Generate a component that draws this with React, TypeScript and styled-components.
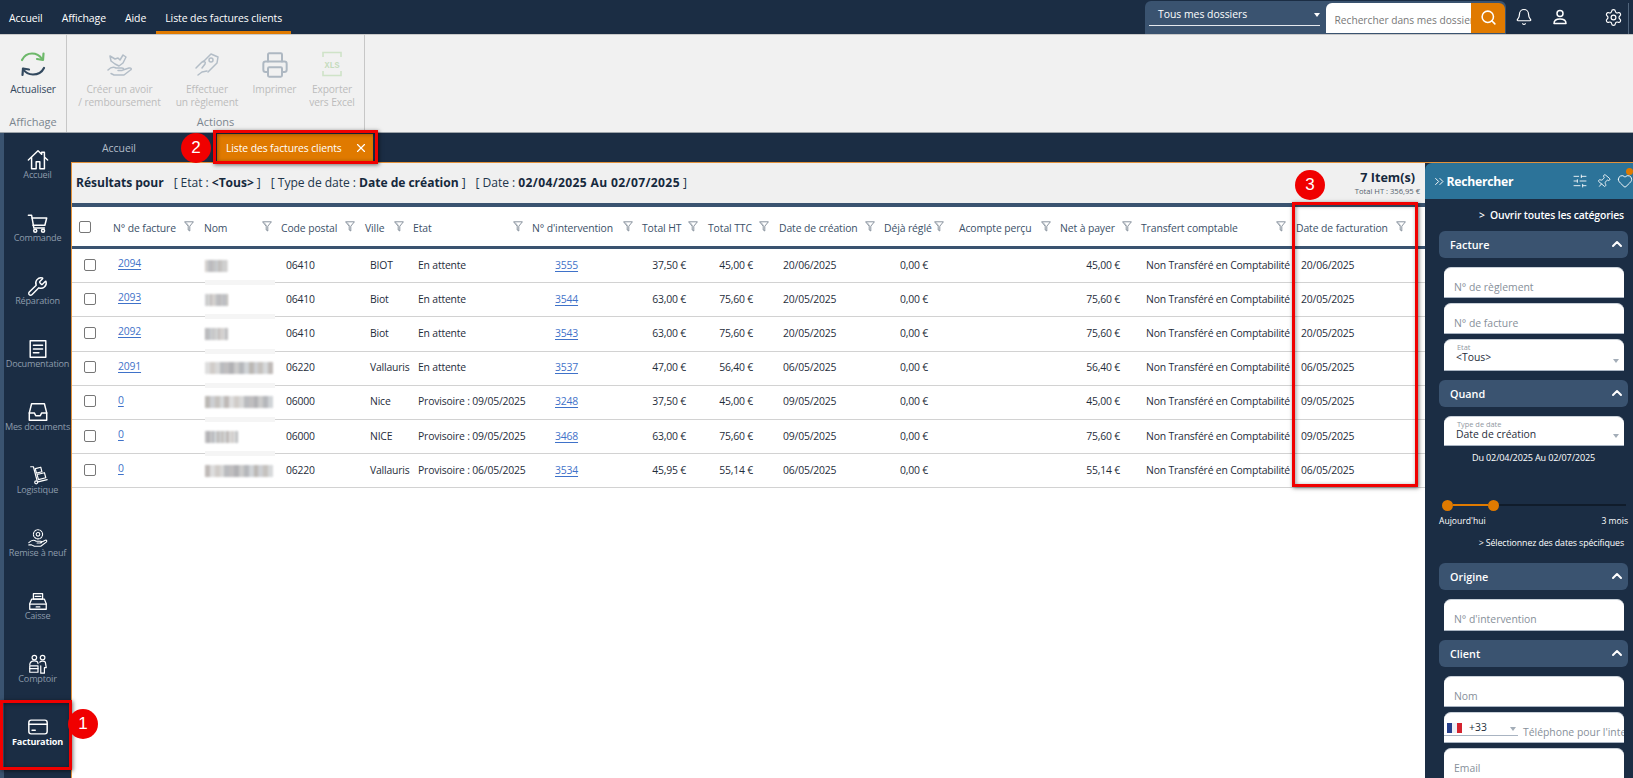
import React from 'react';
import styled, { createGlobalStyle } from 'styled-components';
import { Wrench, Printer, Search, X, Bell, Settings, SlidersHorizontal, Pin, Heart, ChevronUp, ChevronsRight } from 'lucide-react';

const NAVY = '#1b2d44';
const SLATE = '#3a5370';
const ORANGE = '#e07a00';
const FONT = '"Open Sans", "Noto Sans", sans-serif';

const Global = createGlobalStyle`
  html, body { margin: 0; padding: 0; background: #fff; }
  * { box-sizing: border-box; }
  body { font-family: ${FONT}; }
`;

const Page = styled.div`
  position: relative;
  width: 1633px;
  height: 778px;
  overflow: hidden;
  display: flex;
  flex-direction: column;
  background: ${NAVY};
  font-size: 10px;
`;

/* ---------- top bar ---------- */
const TopBar = styled.header`
  height: 34px;
  flex: none;
  display: flex;
  align-items: stretch;
  justify-content: space-between;
  background: ${NAVY};
`;
const Menu = styled.nav`
  display: flex;
  padding-left: 9px;
  gap: 19px;
`;
const MenuItem = styled.div<{ $active?: boolean }>`
  display: flex;
  align-items: center;
  height: 34px;
  padding-top: 1px;
  color: #fff;
  font-size: 10.5px;
  letter-spacing: -0.1px;
  ${p => p.$active && `
    margin-left: -9px;
    padding: 4px 9px 0;
    border-bottom: 3px solid ${ORANGE};
  `}
`;
const TopRight = styled.div`
  display: flex;
  align-items: flex-start;
`;
const SearchGroup = styled.div`
  width: 361px;
  height: 33px;
  margin-top: 1px;
  display: flex;
  padding: 2px 1px 0 4px;
  background: ${SLATE};
  border-radius: 6px 6px 0 0;
`;
const Scope = styled.div`
  position: relative;
  width: 171px;
  height: 23px;
  padding: 4px 0 0 9px;
  margin-right: 6px;
  color: #fff;
  font-size: 10.4px;
  border-bottom: 1px solid #e5e9ee;
`;
const ScopeCaret = styled.span`
  position: absolute;
  right: 0;
  top: 10px;
  border-left: 3.5px solid transparent;
  border-right: 3.5px solid transparent;
  border-top: 4px solid #fff;
`;
const SearchBox = styled.div`
  width: 146px;
  height: 30px;
  padding: 10px 0 0 9px;
  background: #fff;
  border-radius: 6px 0 0 0;
  color: #777;
  font-size: 10.2px;
  white-space: nowrap;
  overflow: hidden;
`;
const SearchButton = styled.div`
  width: 34px;
  height: 30px;
  display: flex;
  align-items: center;
  justify-content: center;
  padding-bottom: 1px;
  background: ${ORANGE};
  color: #fff;
  border-radius: 0 6px 0 0;
`;
const TopIcons = styled.div`
  width: 127px;
  height: 34px;
  display: flex;
  align-items: center;
  color: #fff;
`;
const TopIcon = styled.span<{ $left: number }>`
  display: flex;
  margin-left: ${p => p.$left}px;
`;
const EdgeBar = styled.span`
  width: 1px;
  height: 31px;
  margin: 3px 0 0 5px;
  background: #51657c;
`;

/* ---------- ribbon ---------- */
const Ribbon = styled.section`
  height: 99px;
  flex: none;
  display: flex;
  background: #f1f1f1;
  border-top: 1px solid #c9c9c9;
  border-bottom: 1px solid #9ea4aa;
`;
const RibbonGroup = styled.div<{ $w: number }>`
  width: ${p => p.$w}px;
  display: flex;
  flex-direction: column;
  border-right: 1px solid #c7c7c7;
`;
const RibbonButtons = styled.div`
  flex: 1;
  min-height: 0;
  display: flex;
`;
const RibbonButton = styled.div<{ $w: number; $off?: boolean }>`
  width: ${p => p.$w}px;
  display: flex;
  flex-direction: column;
  align-items: center;
  padding-top: 16px;
  text-align: center;
  font-size: 10.2px;
  line-height: 13px;
  letter-spacing: -0.1px;
  color: ${p => (p.$off ? '#bcbcbc' : '#33475c')};
`;
const RibbonIcon = styled.div`
  height: 32px;
  display: flex;
  align-items: flex-start;
`;
const RibbonLabel = styled.div`
  height: 20px;
  flex: none;
  text-align: center;
  color: #7b858f;
  font-size: 11px;
  line-height: 20px;
`;

/* ---------- body ---------- */
const Body = styled.div`
  flex: 1;
  min-height: 0;
  display: flex;
`;
const Sidebar = styled.aside`
  width: 71px;
  flex: none;
  padding-top: 12px;
  background: ${NAVY};
  border-left: 4px solid ${SLATE};
`;
const SideItem = styled.div`
  height: 63px;
  display: flex;
  flex-direction: column;
  align-items: center;
  padding-top: 3px;
  color: #fff;
`;
const SideIcon = styled.div`
  height: 24px;
  display: flex;
  align-items: center;
  justify-content: center;
`;
const SideLabel = styled.div<{ $active?: boolean }>`
  margin-top: -3px;
  font-size: 9.1px;
  letter-spacing: -0.2px;
  line-height: 12px;
  white-space: nowrap;
  color: ${p => (p.$active ? '#fff' : '#8d9cac')};
  font-weight: ${p => (p.$active ? 700 : 400)};
`;
const MainColumn = styled.main`
  flex: 1;
  min-width: 0;
  display: flex;
  flex-direction: column;
`;
const TabBar = styled.div`
  height: 29px;
  flex: none;
  display: flex;
  align-items: stretch;
`;
const PlainTab = styled.div`
  width: 146px;
  padding: 8px 0 0 31px;
  color: #b2bcc7;
  font-size: 10.4px;
`;
const ActiveTab = styled.div`
  width: 156px;
  margin-top: 1px;
  display: flex;
  align-items: center;
  justify-content: space-between;
  padding: 0 5px 0 9px;
  background: ${ORANGE};
  color: #fff;
  font-size: 10.4px;
  letter-spacing: -0.1px;
`;
const Workspace = styled.div`
  flex: 1;
  min-height: 0;
  display: flex;
  border-top: 1px solid #e2913a;
`;
const Results = styled.div`
  width: 1354px;
  flex: none;
  background: #fff;
  border-left: 1px solid #e2913a;
`;
const ResultHead = styled.div`
  height: 44px;
  display: flex;
  justify-content: space-between;
  background: #f0f0f0;
  border-bottom: 4px solid ${SLATE};
  color: #22364b;
`;
const Criteria = styled.div`
  display: flex;
  padding: 12px 0 0 4px;
  font-size: 12.1px;
  line-height: 16px;
  white-space: pre;
  letter-spacing: -0.05px;
  b { font-weight: 700; color: #16293d; }
`;
const CriteriaPart = styled.span`
  margin-right: 10px;
`;
const DateValue = styled.b`
  letter-spacing: 0.35px;
`;
const Totals = styled.div`
  display: flex;
  flex-direction: column;
  align-items: flex-end;
  padding: 7px 5px 0 0;
`;
const ItemCount = styled.div`
  font-size: 12.6px;
  font-weight: 700;
  line-height: 16px;
  padding-right: 5px;
  color: #16293d;
`;
const TotalHT = styled.div`
  font-size: 7.6px;
  line-height: 11px;
  color: #55636f;
`;

const COLS = '33px 91px 77px 84px 48px 119px 110px 66px 71px 105px 75px 101px 81px 155px 137px';

const HeadRow = styled.div`
  height: 41px;
  margin-top: 1px;
  display: grid;
  grid-template-columns: ${COLS};
  border-bottom: 3px solid ${SLATE};
  background: #fff;
`;
const HeadCell = styled.div<{ $pr: number }>`
  display: flex;
  align-items: center;
  justify-content: space-between;
  padding: 2px ${p => p.$pr}px 0 8px;
  color: #3b5068;
  font-size: 10.4px;
  letter-spacing: -0.1px;
  white-space: nowrap;
  svg { margin-top: -3px; flex: none; }
`;
const Row = styled.div`
  height: 34.2px;
  display: grid;
  grid-template-columns: ${COLS};
  border-bottom: 1px solid #d2d2d2;
`;
const Cell = styled.div<{ $align?: string; $pl?: number; $pr?: number }>`
  position: relative;
  display: flex;
  align-items: center;
  min-width: 0;
  white-space: nowrap;
  justify-content: ${p => (p.$align === 'right' ? 'flex-end' : 'flex-start')};
  padding: 0 ${p => p.$pr ?? 0}px 2px ${p => p.$pl ?? 13}px;
  color: #1f2d3b;
  font-size: 10.4px;
  letter-spacing: -0.18px;
`;
const NameCell = styled.div<{ $band: boolean }>`
  position: relative;
  display: flex;
  align-items: center;
  padding-left: 9px;
  ${p => p.$band && `
    &::before {
      content: '';
      position: absolute;
      left: 9px;
      top: -3px;
      width: 70px;
      height: 5px;
      background: #f5f5f5;
    }
  `}
`;
const Blur = styled.div`
  height: 12px;
  filter: blur(1px);
  opacity: 0.85;
`;
const Check = styled.span<{ $ml: number }>`
  width: 12px;
  height: 12px;
  flex: none;
  margin-left: ${p => p.$ml}px;
  background: #fff;
  border: 1.5px solid #777;
  border-radius: 2px;
`;
const CheckHead = styled.div`
  display: flex;
  align-items: center;
`;
const CheckCell = styled.div`
  display: flex;
  align-items: center;
  padding-bottom: 2px;
`;
const DocLink = styled.a`
  color: #3f72c9;
  text-decoration: underline;
  text-underline-offset: 2px;
`;
const UpLink = styled(DocLink)`
  margin-top: -3px;
`;

/* ---------- search panel ---------- */
const Panel = styled.aside`
  width: 208px;
  flex: none;
  background: ${NAVY};
  border-radius: 7px 0 0 0;
  overflow: hidden;
  color: #fff;
`;
const PanelHead = styled.div`
  height: 36px;
  display: flex;
  align-items: center;
  padding-left: 7px;
  background: #2c7399;
`;
const PanelTitle = styled.div`
  width: 126px;
  font-size: 12.2px;
  font-weight: 700;
  letter-spacing: -0.25px;
`;
const PanelIcon = styled.span<{ $ml: number }>`
  display: flex;
  margin-left: ${p => p.$ml}px;
`;
const HeartWrap = styled.span`
  position: relative;
  display: flex;
  margin-left: 6px;
`;
const Dot = styled.span`
  position: absolute;
  left: 9px;
  top: -5px;
  width: 7px;
  height: 7px;
  border-radius: 50%;
  background: ${ORANGE};
`;
const PanelBody = styled.div`
  padding: 0 5px 0 14px;
`;
const OpenAll = styled.div`
  height: 32px;
  padding: 9px 4px 0 0;
  text-align: right;
  font-size: 10.4px;
  font-weight: 600;
  letter-spacing: -0.15px;
  white-space: pre;
`;
const SectionHead = styled.div`
  height: 27px;
  margin-bottom: 9px;
  display: flex;
  align-items: center;
  justify-content: space-between;
  padding: 0 3px 1px 11px;
  background: ${SLATE};
  border-radius: 6px;
  font-size: 10.8px;
  font-weight: 600;
`;
const Fields = styled.div`
  padding: 0 4px 0 5px;
  margin-bottom: 9px;
`;
const Field = styled.div<{ $h?: number }>`
  position: relative;
  height: ${p => p.$h ?? 31}px;
  margin-bottom: 5px;
  padding: 12px 0 0 10px;
  background: #fff;
  border-radius: 7px 7px 0 0;
  border-top: 1px solid #c9d0d8;
  border-bottom: 1px solid #a9b4c2;
  color: #87909a;
  font-size: 10.4px;
  line-height: 14px;
  white-space: nowrap;
  overflow: hidden;
  &:last-child { margin-bottom: 0; }
`;
const SelectField = styled(Field)`
  padding: 3px 0 0 13px;
  color: #1f2d3b;
`;
const TinyLabel = styled.div`
  font-size: 7.4px;
  line-height: 8px;
  color: #8f98a2;
`;
const SelectValue = styled.div`
  font-size: 10.4px;
  line-height: 13px;
  margin-left: -1px;
`;
const SelectCaret = styled.span`
  position: absolute;
  right: 5px;
  bottom: 7px;
  border-left: 3.5px solid transparent;
  border-right: 3.5px solid transparent;
  border-top: 4px solid #a3adb8;
`;
const DateRange = styled.div`
  margin-top: -4px;
  height: 14px;
  text-align: center;
  font-size: 9.1px;
  line-height: 14px;
  font-weight: 500;
  letter-spacing: -0.15px;
`;
const Slider = styled.div`
  margin-top: 34px;
  height: 12px;
  display: flex;
  align-items: center;
  padding: 0 2px 0 3px;
`;
const Thumb = styled.span`
  width: 11px;
  height: 11px;
  flex: none;
  border-radius: 50%;
  background: ${ORANGE};
`;
const ActiveTrack = styled.span`
  width: 35px;
  height: 2px;
  background: ${ORANGE};
`;
const RestTrack = styled.span`
  flex: 1;
  height: 2px;
  background: #101c2b;
`;
const SliderLabels = styled.div`
  margin-top: 4px;
  display: flex;
  justify-content: space-between;
  font-size: 8.6px;
  line-height: 12px;
  font-weight: 500;
`;
const SpecificDates = styled.div`
  margin: 10px 4px 14px 0;
  text-align: right;
  font-size: 8.8px;
  line-height: 12px;
  letter-spacing: -0.1px;
  font-weight: 500;
`;
const PhoneField = styled(Field)`
  display: flex;
  padding: 0;
`;
const Dial = styled.div`
  position: relative;
  width: 74px;
  height: 23px;
  flex: none;
  display: flex;
  align-items: flex-end;
  padding: 0 0 1px 25px;
  border-bottom: 1px solid #a9b4c2;
  color: #1f2d3b;
`;
const Flag = styled.span`
  position: absolute;
  left: 3px;
  top: 10px;
  width: 15px;
  height: 10px;
  filter: blur(0.7px);
  background: linear-gradient(90deg, #27408b 0 33%, #eef0f6 33% 66%, #d5232f 66%);
`;
const DialCaret = styled(SelectCaret)`
  right: 2px;
  bottom: 4px;
`;
const PhoneHint = styled.div`
  margin: 12px 0 0 5px;
`;

/* ---------- annotations ---------- */
const Callout = styled.div<{ $x: number; $y: number; $w: number; $h: number }>`
  position: absolute;
  left: ${p => p.$x}px;
  top: ${p => p.$y}px;
  width: ${p => p.$w}px;
  height: ${p => p.$h}px;
  border: 3px solid #f00000;
  box-shadow: 1px 1px 4px rgba(0, 0, 0, 0.55), inset 1px 1px 4px rgba(0, 0, 0, 0.4);
  pointer-events: none;
`;
const Badge = styled.div<{ $x: number; $y: number }>`
  position: absolute;
  left: ${p => p.$x}px;
  top: ${p => p.$y}px;
  width: 30px;
  height: 30px;
  display: flex;
  align-items: center;
  justify-content: center;
  border-radius: 50%;
  background: #f00000;
  color: #fff;
  font-family: "Liberation Sans", sans-serif;
  font-size: 17px;
`;

/* ---------- icons ---------- */
const Line: React.FC<{ s?: number; children: React.ReactNode; vb?: string; c?: string; w?: number }> = ({ s = 22, children, vb = '0 0 24 24', c = 'currentColor', w = 1.6 }) => (
  <svg width={s} height={s} viewBox={vb} fill="none" stroke={c} strokeWidth={w} strokeLinecap="round" strokeLinejoin="round">{children}</svg>
);
const HomeIcon = () => <Line><path d="M1.5 12 12 2l4 3.8V3.5h3v5.2l3.5 3.3" /><path d="M5 9.500V21.500h5V14h4v7.500h5V9.500" /></Line>;
const CartIcon = () => <Line><path d="M1.500 3.500h3.500l2.500 14h11.500" /><path d="M5.500 6.500h16l-2 8h-13" /><circle cx="9" cy="20.500" r="1.700" /><circle cx="17.500" cy="20.500" r="1.700" /></Line>;
const DocIcon = () => <Line><rect x="3.500" y="3" width="17" height="18" /><path d="M7 8h10M7 12h10M7 16h6" /></Line>;
const TrayIcon = () => <Line><path d="M5 3h14l2.500 10v8h-19v-8z" /><path d="M2.500 13H8l1.500 3h5l1.500-3h5.500" /></Line>;
const TruckIcon = () => <Line w={1.3}><path d="M4 3h3l4 15" /><circle cx="10" cy="20" r="1.600" /><path d="M12 19.500 22 17" /><path d="M9 5l6-1.500 1.300 5-6 1.500zM11 11.500l8-2 1.500 5.500-8 2z" /></Line>;
const RefurbIcon = () => <Line w={1.2}><circle cx="12" cy="8" r="2" /><circle cx="12" cy="8" r="5" strokeDasharray="2 1.200" /><path d="M2 17c3-3 6-3 8-1.500h5c1.200 0 1.200 2 0 2h-4M15 17l5-2.500c1.500-.5 2.200 1 1 2l-6 4.500H8l-3-1.500H2" /></Line>;
const RegisterIcon = () => <Line w={1.4}><path d="M7 4h10v6H7z" /><path d="M5 10h14l2 5v6H3v-6z" /><path d="M3 15.500h18M10 18.500h4M9 7h6" /></Line>;
const CounterIcon = () => <Line w={1.3}><circle cx="8" cy="5" r="2.500" /><circle cx="17" cy="5" r="2.500" /><path d="M3 13c0-3 2-4.500 5-4.500s4 1 4 3" /><path d="M14 10c1-1.500 5-1.500 6 0l1 6h-2v6h-4v-8" /><rect x="3" y="14" width="9" height="7" /><path d="M3 17h9" /></Line>;
const CardIcon = () => <Line><rect x="2" y="4.500" width="20" height="15" rx="2.500" /><path d="M2 9h20M5.500 15.500h3.500" /></Line>;

const FilterIcon = () => (
  <svg width="10" height="11" viewBox="0 0 10 11" fill="none" stroke="#7d8894" strokeWidth="0.9" strokeLinejoin="round">
    <path d="M.6.8h8.800L5.800 5.200V10L4.200 9V5.200z" />
    <path d="M2.300 1.500 4.800 5" strokeWidth="0.5" />
  </svg>
);
const RefreshIcon = () => (
  <svg width="26" height="26" viewBox="0 0 26 26" fill="none" strokeWidth="2.200" strokeLinecap="round" strokeLinejoin="round">
    <path d="M2 9c2.500-5 6-6.500 10-6.500S20 5 22 8" stroke="#6db86a" />
    <path d="M23.500 2.500 23 9l-6-1" stroke="#6db86a" />
    <path d="M24 17c-2.500 5-6 6.500-11 6.500S5 21 3 18" stroke="#33495f" />
    <path d="M2.500 24 3 17.500l6 1" stroke="#33495f" />
  </svg>
);
const HandNoteIcon = () => (
  <svg width="26" height="26" viewBox="0 0 26 26" fill="none" stroke="#b3bdc7" strokeWidth="1.500" strokeLinejoin="round" strokeLinecap="round">
    <path d="M3 5l5 3 3-1 2 2 3-5 3 2-3 6-4 3-4-2-4-3z" />
    <path d="M1 19c3-3 6-3 8-2h6c2 0 2 2 0 2.500h-4M16 19l6-2c2-.5 3 1 1.500 2L17 24H7l-3-1.500" />
  </svg>
);
const HandBillIcon = () => (
  <svg width="26" height="26" viewBox="0 0 26 26" fill="none" stroke="#b3bdc7" strokeWidth="1.500" strokeLinejoin="round" strokeLinecap="round">
    <path d="M9 11 17 3l7 3-1 6-9 9" />
    <circle cx="17" cy="9" r="2" />
    <path d="M2 17l6-6c2-1.500 4 0 3 2l-3 4M4 24l4-3 5-1" />
  </svg>
);
const XlsIcon = () => (
  <svg width="22" height="26" viewBox="0 0 22 26" fill="none" stroke="#cfe3c8" strokeWidth="1.600">
    <path d="M2 6V1.500h18V6M2 20v4.500h18V20" />
    <text x="11" y="16.500" fill="#c5dcbd" stroke="none" fontSize="8.500" fontWeight="700" textAnchor="middle" fontFamily="'Liberation Mono', monospace">XLS</text>
  </svg>
);
const UserIcon = () => (
  <svg width="16" height="16" viewBox="0 0 16 16" fill="none" stroke="#fff" strokeWidth="1.500" strokeLinejoin="round">
    <circle cx="8" cy="4.500" r="3" />
    <path d="M2 14.500c0-3.500 2.500-4.500 6-4.500s6 1 6 4.500z" />
  </svg>
);

/* ---------- data ---------- */
const HEAD: [string, number][] = [
  ['N° de facture', 2], ['Nom', 1], ['Code postal', 2], ['Ville', 1], ['Etat', 1], ["N° d'intervention", 1],
  ['Total HT', 2], ['Total TTC', 2], ['Date de création', 1], ['Déjà réglé', 7], ['Acompte perçu', 1],
  ['Net à payer', 1], ['Transfert comptable', 2], ['Date de facturation', 19],
];

const MOSAIC = ['#c9c4c0', '#b5b3b5', '#a9abb0', '#c5c7cb', '#b4aeab', '#d2d2d2', '#a4a4a8', '#c8ccd0', '#bcb8b4', '#d8d8d8', '#aeb0b4', '#c2c2c2', '#b0aca8', '#cfd2d4'];
const blurBg = (seed: number) => {
  const n = MOSAIC.length;
  const stops = Array.from({ length: n }, (_, i) => {
    const c = MOSAIC[(i * 5 + seed * 3) % n];
    return `${c} ${(i * 100) / n}% ${((i + 1) * 100) / n}%`;
  });
  return `linear-gradient(90deg, ${stops.join(',')})`;
};

type Inv = { no: string; nameW: number; cp: string; ville: string; etat: string; inter: string; ht: string; ttc: string; cree: string; net: string; fact: string };
const ROWS: Inv[] = [
  { no: '2094', nameW: 23, cp: '06410', ville: 'BIOT', etat: 'En attente', inter: '3555', ht: '37,50 €', ttc: '45,00 €', cree: '20/06/2025', net: '45,00 €', fact: '20/06/2025' },
  { no: '2093', nameW: 23, cp: '06410', ville: 'Biot', etat: 'En attente', inter: '3544', ht: '63,00 €', ttc: '75,60 €', cree: '20/05/2025', net: '75,60 €', fact: '20/05/2025' },
  { no: '2092', nameW: 23, cp: '06410', ville: 'Biot', etat: 'En attente', inter: '3543', ht: '63,00 €', ttc: '75,60 €', cree: '20/05/2025', net: '75,60 €', fact: '20/05/2025' },
  { no: '2091', nameW: 71, cp: '06220', ville: 'Vallauris', etat: 'En attente', inter: '3537', ht: '47,00 €', ttc: '56,40 €', cree: '06/05/2025', net: '56,40 €', fact: '06/05/2025' },
  { no: '0', nameW: 68, cp: '06000', ville: 'Nice', etat: 'Provisoire : 09/05/2025', inter: '3248', ht: '37,50 €', ttc: '45,00 €', cree: '09/05/2025', net: '45,00 €', fact: '09/05/2025' },
  { no: '0', nameW: 33, cp: '06000', ville: 'NICE', etat: 'Provisoire : 09/05/2025', inter: '3468', ht: '63,00 €', ttc: '75,60 €', cree: '09/05/2025', net: '75,60 €', fact: '09/05/2025' },
  { no: '0', nameW: 71, cp: '06220', ville: 'Vallauris', etat: 'Provisoire : 06/05/2025', inter: '3534', ht: '45,95 €', ttc: '55,14 €', cree: '06/05/2025', net: '55,14 €', fact: '06/05/2025' },
];

const SIDE: [string, React.ReactNode][] = [
  ['Accueil', <HomeIcon />],
  ['Commande', <CartIcon />],
  ['Réparation', <Wrench size={21} strokeWidth={1.6} />],
  ['Documentation', <DocIcon />],
  ['Mes documents', <TrayIcon />],
  ['Logistique', <TruckIcon />],
  ['Remise à neuf', <RefurbIcon />],
  ['Caisse', <RegisterIcon />],
  ['Comptoir', <CounterIcon />],
  ['Facturation', <CardIcon />],
];

const Section: React.FC<{ title: string }> = ({ title }) => (
  <SectionHead>{title}<ChevronUp size={16} strokeWidth={3} /></SectionHead>
);

export default function App() {
  return (
    <Page>
      <Global />
      <TopBar>
        <Menu>
          <MenuItem>Accueil</MenuItem>
          <MenuItem>Affichage</MenuItem>
          <MenuItem>Aide</MenuItem>
          <MenuItem $active>Liste des factures clients</MenuItem>
        </Menu>
        <TopRight>
          <SearchGroup>
            <Scope>Tous mes dossiers<ScopeCaret /></Scope>
            <SearchBox>Rechercher dans mes dossiers</SearchBox>
            <SearchButton><Search size={17} strokeWidth={2.2} /></SearchButton>
          </SearchGroup>
          <TopIcons>
            <TopIcon $left={9}><Bell size={18} strokeWidth={1.6} /></TopIcon>
            <TopIcon $left={19}><UserIcon /></TopIcon>
            <TopIcon $left={36}><Settings size={19} strokeWidth={1.5} /></TopIcon>
            <EdgeBar />
          </TopIcons>
        </TopRight>
      </TopBar>

      <Ribbon>
        <RibbonGroup $w={67}>
          <RibbonButtons>
            <RibbonButton $w={66}><RibbonIcon><RefreshIcon /></RibbonIcon>Actualiser</RibbonButton>
          </RibbonButtons>
          <RibbonLabel>Affichage</RibbonLabel>
        </RibbonGroup>
        <RibbonGroup $w={298}>
          <RibbonButtons>
            <RibbonButton $w={105} $off><RibbonIcon><HandNoteIcon /></RibbonIcon>Créer un avoir<br />/ remboursement</RibbonButton>
            <RibbonButton $w={70} $off><RibbonIcon><HandBillIcon /></RibbonIcon>Effectuer<br />un règlement</RibbonButton>
            <RibbonButton $w={65} $off><RibbonIcon><Printer size={28} strokeWidth={1.7} color="#aeb8c2" /></RibbonIcon>Imprimer</RibbonButton>
            <RibbonButton $w={50} $off><RibbonIcon><XlsIcon /></RibbonIcon>Exporter<br />vers Excel</RibbonButton>
          </RibbonButtons>
          <RibbonLabel>Actions</RibbonLabel>
        </RibbonGroup>
      </Ribbon>

      <Body>
        <Sidebar>
          {SIDE.map(([label, icon], i) => (
            <SideItem key={label}>
              <SideIcon>{icon}</SideIcon>
              <SideLabel $active={i === SIDE.length - 1}>{label}</SideLabel>
            </SideItem>
          ))}
        </Sidebar>
        <MainColumn>
          <TabBar>
            <PlainTab>Accueil</PlainTab>
            <ActiveTab>Liste des factures clients<X size={14} strokeWidth={2} /></ActiveTab>
          </TabBar>
          <Workspace>
            <Results>
              <ResultHead>
                <Criteria>
                  <CriteriaPart><b>Résultats pour</b></CriteriaPart>
                  <CriteriaPart>[ Etat : <b>&lt;Tous&gt;</b> ]</CriteriaPart>
                  <CriteriaPart>[ Type de date : <b>Date de création</b> ]</CriteriaPart>
                  <CriteriaPart>[ Date : <DateValue>02/04/2025 Au 02/07/2025</DateValue> ]</CriteriaPart>
                </Criteria>
                <Totals>
                  <ItemCount>7 Item(s)</ItemCount>
                  <TotalHT>Total HT : 356,95 €</TotalHT>
                </Totals>
              </ResultHead>
              <HeadRow>
                <CheckHead><Check $ml={7} /></CheckHead>
                {HEAD.map(([label, pr]) => (
                  <HeadCell key={label} $pr={pr}>{label}<FilterIcon /></HeadCell>
                ))}
              </HeadRow>
              {ROWS.map((r, i) => (
                <Row key={r.inter}>
                  <CheckCell><Check $ml={12} /></CheckCell>
                  <Cell><UpLink>{r.no}</UpLink></Cell>
                  <NameCell $band={i > 0}><Blur style={{ width: r.nameW, background: blurBg(i) }} /></NameCell>
                  <Cell>{r.cp}</Cell>
                  <Cell>{r.ville}</Cell>
                  <Cell>{r.etat}</Cell>
                  <Cell $pl={31}><DocLink>{r.inter}</DocLink></Cell>
                  <Cell $align="right" $pr={14}>{r.ht}</Cell>
                  <Cell $align="right" $pr={18}>{r.ttc}</Cell>
                  <Cell $pl={12}>{r.cree}</Cell>
                  <Cell $align="right" $pr={23}>0,00 €</Cell>
                  <Cell />
                  <Cell $align="right" $pr={13}>{r.net}</Cell>
                  <Cell $pl={13}>Non Transféré en Comptabilité</Cell>
                  <Cell>{r.fact}</Cell>
                </Row>
              ))}
            </Results>
            <Panel>
              <PanelHead>
                <ChevronsRight size={15} strokeWidth={1.6} />
                <PanelTitle>Rechercher</PanelTitle>
                <PanelIcon $ml={3}><SlidersHorizontal size={16} strokeWidth={1.3} /></PanelIcon>
                <PanelIcon $ml={8}><Pin size={15} strokeWidth={1.3} style={{ transform: 'rotate(40deg)' }} /></PanelIcon>
                <HeartWrap><Heart size={16} strokeWidth={1.4} /><Dot /></HeartWrap>
              </PanelHead>
              <PanelBody>
                <OpenAll>{'>  Ouvrir toutes les catégories'}</OpenAll>
                <Section title="Facture" />
                <Fields>
                  <Field>N° de règlement</Field>
                  <Field>N° de facture</Field>
                  <SelectField $h={32}>
                    <TinyLabel>Etat</TinyLabel>
                    <SelectValue>&lt;Tous&gt;</SelectValue>
                    <SelectCaret />
                  </SelectField>
                </Fields>
                <Section title="Quand" />
                <Fields>
                  <SelectField $h={30}>
                    <TinyLabel>Type de date</TinyLabel>
                    <SelectValue>Date de création</SelectValue>
                    <SelectCaret />
                  </SelectField>
                </Fields>
                <DateRange>Du 02/04/2025 Au 02/07/2025</DateRange>
                <Slider><Thumb /><ActiveTrack /><Thumb /><RestTrack /></Slider>
                <SliderLabels><span>Aujourd'hui</span><span>3 mois</span></SliderLabels>
                <SpecificDates>&gt; Sélectionnez des dates spécifiques</SpecificDates>
                <Section title="Origine" />
                <Fields><Field $h={32}>N° d'intervention</Field></Fields>
                <Section title="Client" />
                <Fields>
                  <Field>Nom</Field>
                  <PhoneField>
                    <Dial><Flag />+33<DialCaret /></Dial>
                    <PhoneHint>Téléphone pour l'intervention</PhoneHint>
                  </PhoneField>
                  <Field>Email</Field>
                </Fields>
              </PanelBody>
            </Panel>
          </Workspace>
        </MainColumn>
      </Body>

      <Callout $x={0} $y={700} $w={72} $h={70} />
      <Badge $x={68} $y={709}>1</Badge>
      <Callout $x={213} $y={130} $w={165} $h={34} />
      <Badge $x={181} $y={133}>2</Badge>
      <Callout $x={1292} $y={202} $w={126} $h={285} />
      <Badge $x={1295} $y={170}>3</Badge>
    </Page>
  );
}
